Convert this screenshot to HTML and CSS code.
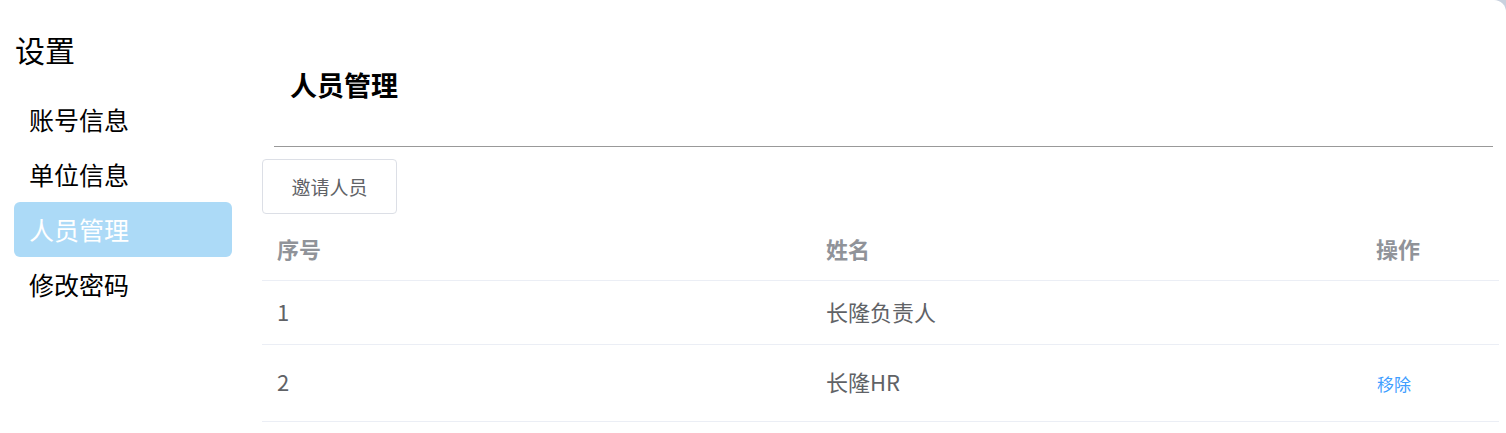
FILE: index.html
```html
<!DOCTYPE html>
<html lang="zh-CN">
<head>
<meta charset="utf-8">
<title>设置 - 人员管理</title>
<link rel="stylesheet" href="styles.css">
</head>
<body>
<div class="frame">
  <aside class="sidebar">
    <div class="side-title">设置</div>
    <nav class="menu">
      <div class="menu-item">账号信息</div>
      <div class="menu-item">单位信息</div>
      <div class="menu-item active">人员管理</div>
      <div class="menu-item">修改密码</div>
    </nav>
  </aside>
  <main class="content">
    <h2 class="page-title">人员管理</h2>
    <div class="divider"></div>
    <button class="btn">邀请人员</button>
    <div class="table">
      <div class="row head">
        <div class="cell c1">序号</div>
        <div class="cell c2">姓名</div>
        <div class="cell c3">操作</div>
      </div>
      <div class="row r1">
        <div class="cell c1">1</div>
        <div class="cell c2">长隆负责人</div>
        <div class="cell c3"></div>
      </div>
      <div class="row r2">
        <div class="cell c1">2</div>
        <div class="cell c2">长隆HR</div>
        <div class="cell c3"><a class="link">移除</a></div>
      </div>
    </div>
  </main>
</div>
</body>
</html>
```

FILE: styles.css
```css
* { box-sizing: border-box; }
html, body { margin: 0; padding: 0; }
body {
  background: #c9d1de;
  font-family: "Noto Sans CJK SC", "Noto Sans", sans-serif;
  width: 1506px;
  height: 433px;
  overflow: hidden;
}
.frame {
  display: flex;
  background: #fff;
  height: 433px;
  border-top-right-radius: 12px;
}
.sidebar {
  width: 232px;
  padding-left: 14px;
  padding-top: 29px;
  flex: none;
}
.side-title {
  font-size: 30px;
  line-height: 40px;
  color: #000;
  padding-left: 1px;
  margin-bottom: 23px;
}
.menu { display: flex; flex-direction: column; }
.menu-item {
  height: 55px;
  line-height: 55px;
  font-size: 25px;
  padding-left: 15px;
  color: #000;
  border-radius: 6px;
}
.menu-item.active {
  background: #acdaf7;
  color: #fff;
}
.content {
  flex: 1;
  padding-left: 30px;
  padding-right: 7px;
  display: flex;
  flex-direction: column;
}
.page-title {
  margin: 65px 0 0 28px;
  font-size: 27px;
  line-height: 40px;
  font-weight: bold;
  color: #000;
}
.divider {
  margin: 41px 6px 0 12px;
  border-top: 1px solid #999;
}
.btn {
  align-self: flex-start;
  margin-top: 12px;
  width: 135px;
  height: 55px;
  border: 1px solid #dcdfe6;
  border-radius: 4px;
  background: #fff;
  font-family: inherit;
  font-size: 19px;
  color: #606266;
  padding: 0;
}
.table {
  margin-top: 4px;
  width: 1237px;
}
.row {
  display: flex;
  border-bottom: 1px solid #ebeef5;
  align-items: center;
}
.row.head { height: 63px; }
.row.r1 { height: 64px; }
.row.r2 { height: 77px; }
.cell {
  padding-left: 15px;
  padding-bottom: 4px;
  font-size: 22px;
  color: #606266;
}
.c1 { width: 549px; }
.c2 { width: 550px; }
.c3 { flex: 1; }
.head .cell {
  font-weight: bold;
  color: #909399;
  padding-bottom: 2px;
}
.link {
  color: #409eff;
  font-size: 17px;
  padding-left: 1px;
}
```
